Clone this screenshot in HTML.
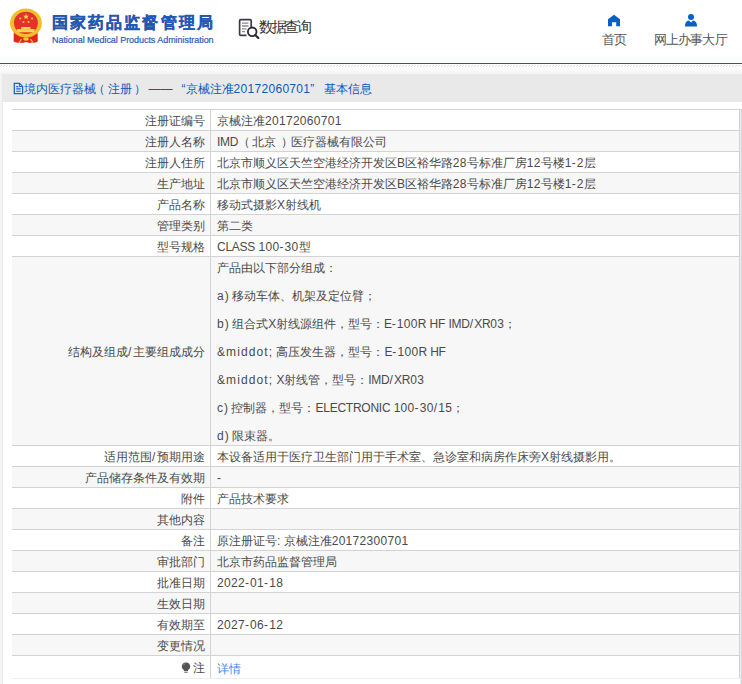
<!DOCTYPE html>
<html><head><meta charset="utf-8">
<style>
*{margin:0;padding:0;box-sizing:border-box}
html,body{width:742px;height:684px;overflow:hidden;background:#fff}
body{position:relative;font-family:"Liberation Sans",sans-serif;font-size:12px;color:#4a4a4a}
.abs{position:absolute;white-space:nowrap}
#title{left:52px;top:10.5px;font-size:16px;letter-spacing:2.1px;font-weight:bold;color:#2458b0;-webkit-text-stroke:0.3px #2458b0;line-height:24px}
#sub{left:52px;top:34px;font-size:9px;letter-spacing:-0.05px;color:#2a5cb0;-webkit-text-stroke:0.2px #2a5cb0;line-height:12px}
#sjcx{left:259px;top:16px;font-size:15px;letter-spacing:-2.4px;color:#333;line-height:22px}
.nav{font-size:13px;letter-spacing:-0.6px;color:#555;line-height:16px}
#blue{left:0;top:63px;width:742px;height:1px;background:#0a5fc4}
#hatch{left:0;top:65px;width:742px;height:2px;background:repeating-linear-gradient(135deg,#fff 0,#fff 1.5px,#ddd 1.5px,#ddd 2.5px)}
#fade{left:0;top:67px;width:742px;height:7px;background:linear-gradient(#fff,#f4f4f4)}
#lstrip{left:0;top:74px;width:3px;height:610px;background:linear-gradient(90deg,#f4f4f4 0,#f4f4f4 2px,#e8e8e8 2px)}
#phead{left:2px;top:74px;width:740px;height:27px;background:#e9e9e9}
#pline{left:2px;top:101px;width:740px;height:1px;background:#e6e9f2}
#pbody{left:3px;top:102px;width:739px;height:582px;background:#fff}
#ptitle{left:24px;top:81px;font-size:12px;color:#0a5ac0;line-height:16px}
.row{position:absolute;left:12px;width:730px;height:21px;border-top:1px solid #d3d3d3}
.row.g{background:#f7f7f7}
.lab{position:absolute;left:0;width:192.6px;text-align:right;top:2px;line-height:19px;white-space:nowrap}
.val{position:absolute;left:205px;top:2px;line-height:19px;white-space:nowrap}
#vdiv{left:210px;top:109px;width:1px;height:569px;background:#d3d3d3}
#rdiv{left:739px;top:109px;width:1px;height:569px;background:#d3d3d3}
#rstrip{left:740px;top:110px;width:2px;height:574px;background:linear-gradient(90deg,#ebebf0 0,#ebebf0 1px,#d9d9dd 1px)}
.lo{letter-spacing:1.1px}.dg{letter-spacing:0.3px}.hy{letter-spacing:1.2px}.up{letter-spacing:-0.25px}
</style></head><body>
<!-- emblem -->
<svg class="abs" style="left:0;top:0" width="50" height="50" viewBox="0 0 50 50">
  <path d="M13.8 32 L13.6 41.6 Q16.5 43.3 19.5 42.4 L22.5 43 L26 42 L29.5 43 L32.5 42.4 Q35.5 43.3 37.8 41.6 L37.6 32Z" fill="#e3261d"/>
  <ellipse cx="25.95" cy="23.1" rx="15.95" ry="14.5" fill="#f1bf2c"/>
  <ellipse cx="25.9" cy="22.9" rx="12" ry="11.1" fill="#e6302a"/>
  <path d="M16.8 29.1 H34.6 V32.3 H16.8Z" fill="#f6d44e"/>
  <path d="M21.2 27 H30.5 V29.1 H21.2Z" fill="#f6d44e"/>
  <path d="M15.5 36.5 Q20 39.5 26 38 Q32 39.5 36.5 36.5 L37 39 Q31 41.5 26 40 Q21 41.5 15 39Z" fill="#e3261d"/>
  <path d="M19 42.5 L21.5 39.2 M33 42.5 L30.5 39.2" stroke="#f3c53a" stroke-width="1.2"/>
  <ellipse cx="26" cy="39" rx="2.8" ry="1.8" fill="#f3c53a"/>
  <path d="M26.1 13.5 l0.8 2.2 2.3 0 -1.85 1.35 .7 2.2 -1.95-1.35 -1.95 1.35 .7-2.2 -1.85-1.35 2.3 0z" fill="#f7d54a"/>
  <circle cx="20.3" cy="18.6" r="1" fill="#f7d54a"/><circle cx="32" cy="18.6" r="1" fill="#f7d54a"/>
  <circle cx="23.5" cy="22.1" r="1" fill="#f7d54a"/><circle cx="28.5" cy="22.1" r="1" fill="#f7d54a"/>
</svg>
<div class="abs" id="title">国家药品监督管理局</div>
<div class="abs" id="sub">National Medical Products Administration</div>
<svg class="abs" style="left:238px;top:18px" width="22" height="21" viewBox="0 0 22 21">
  <path d="M13.2 12.5 V2.8 Q13.2 1.6 12 1.6 H2.8 Q1.6 1.6 1.6 2.8 V16.2 Q1.6 17.4 2.8 17.4 H8.5" fill="none" stroke="#3a3a4c" stroke-width="1.7"/>
  <path d="M4 5.2h6.5M4 8h6.5M4 10.8h4.5M4 13.6h3" stroke="#8a8a8a" stroke-width="1.3"/>
  <circle cx="14.2" cy="13.8" r="4.3" fill="#fff" stroke="#2a2a3c" stroke-width="1.8"/>
  <path d="M17.2 17 L20.3 20" stroke="#2a2a3c" stroke-width="2.2" stroke-linecap="round"/>
</svg>
<div class="abs" id="sjcx">数据查询</div>
<svg class="abs" style="left:607px;top:14px" width="14" height="13" viewBox="0 0 14 13">
  <path d="M7 0.7 L13 5.3 V12.2 H9.2 V8.2 H5 V12.2 H1 V5.3Z" fill="#0a5fc4"/>
</svg>
<div class="abs nav" style="left:602px;top:32px">首页</div>
<svg class="abs" style="left:684px;top:13px" width="14" height="14" viewBox="0 0 14 14">
  <circle cx="7" cy="4" r="3" fill="#0a5fc4"/>
  <path d="M1 13.5 Q1 8 5 7.6 L7 9.6 L9 7.6 Q13 8 13 13.5Z" fill="#0a5fc4"/>
</svg>
<div class="abs nav" style="left:654px;top:32px;letter-spacing:-0.9px">网上办事大厅</div>

<div class="abs" id="blue"></div>
<svg class="abs" style="left:0;top:65px" width="742" height="2"><defs><pattern id="hp" width="3" height="2" patternUnits="userSpaceOnUse"><path d="M-0.5 2.3 L2.2 -0.3" stroke="#d6d6d6" stroke-width="1"/></pattern></defs><rect width="742" height="2" fill="url(#hp)"/></svg>
<div class="abs" id="fade"></div>
<div class="abs" id="lstrip"></div>
<div class="abs" id="phead"></div>
<div class="abs" id="pline"></div>
<div class="abs" id="pbody"></div>
<svg class="abs" style="left:13px;top:82px" width="11" height="13" viewBox="0 0 11 13">
  <path d="M1.3 1.4 H6.6 L9.6 4.4 V11.6 H1.3Z" fill="none" stroke="#1d5fc6" stroke-width="1.25"/>
  <path d="M6.4 1.6 V4.6 H9.4" fill="none" stroke="#1d5fc6" stroke-width="1"/>
  <path d="M3.2 4.6h2.2M3.2 6.9h4.6M3.2 9.3h4.6" stroke="#1d5fc6" stroke-width="1.1"/>
</svg>
<div class="abs" id="ptitle">境内医疗器械<span style="margin-left:-3px;letter-spacing:3px">（</span>注册<span style="margin-left:1.7px;letter-spacing:-0.6px">）</span> —— <span style="margin-left:5.8px">“</span>京械注准<span class="dg">20172060701</span><span style="margin-right:6.3px">”</span> 基本信息</div>

<div id="rows">
<div class="row" style="top:109px"><span class="lab">注册证编号</span><span class="val">京械注准<span class="dg">20172060701</span></span></div>
<div class="row g" style="top:130px"><span class="lab">注册人名称</span><span class="val"><span class="up">IMD</span><span style="letter-spacing:2px">（</span>北京<span style="margin-left:4.8px;letter-spacing:-1.9px">）</span>医疗器械有限公司</span></div>
<div class="row" style="top:151px"><span class="lab">注册人住所</span><span class="val">北京市顺义区天竺空港经济开发区<span class="up">B</span>区裕华路<span class="dg">28</span>号标准厂房<span class="dg">12</span>号楼<span class="dg">1</span><span class="hy">-</span><span class="dg">2</span>层</span></div>
<div class="row g" style="top:172px"><span class="lab">生产地址</span><span class="val">北京市顺义区天竺空港经济开发区<span class="up">B</span>区裕华路<span class="dg">28</span>号标准厂房<span class="dg">12</span>号楼<span class="dg">1</span><span class="hy">-</span><span class="dg">2</span>层</span></div>
<div class="row" style="top:193px"><span class="lab">产品名称</span><span class="val">移动式摄影<span class="up">X</span>射线机</span></div>
<div class="row g" style="top:214px"><span class="lab">管理类别</span><span class="val">第二类</span></div>
<div class="row" style="top:235px"><span class="lab">型号规格</span><span class="val"><span class="up">CLASS</span> <span class="dg">100</span><span class="hy">-</span><span class="dg">30</span>型</span></div>
<div class="row g" style="top:256px;height:189px"><span class="lab" style="top:86px">结构及组成<span class="hy">/</span>主要组成成分</span><span class="val" style="top:2px">产品由以下部分组成：</span><span class="val" style="top:30px"><span class="lo">a</span>) 移动车体、机架及定位臂；</span><span class="val" style="top:58px"><span class="lo">b</span>) 组合式<span class="up">X</span>射线源组件，型号：<span class="up">E</span><span class="hy">-</span><span class="dg">100</span><span class="up">R</span> <span class="up">HF</span> <span class="up">IMD</span><span class="hy">/</span><span class="up">XR</span><span class="dg">03</span>；</span><span class="val" style="top:86px"><span class="lo">&amp;middot;</span> 高压发生器，型号：<span class="up">E</span><span class="hy">-</span><span class="dg">100</span><span class="up">R</span> <span class="up">HF</span></span><span class="val" style="top:114px"><span class="lo">&amp;middot;</span> <span class="up">X</span>射线管，型号：<span class="up">IMD</span><span class="hy">/</span><span class="up">XR</span><span class="dg">03</span></span><span class="val" style="top:142px"><span class="lo">c</span>) 控制器，型号：<span class="up">ELECTRONIC</span> <span class="dg">100</span><span class="hy">-</span><span class="dg">30</span><span class="hy">/</span><span class="dg">15</span>；</span><span class="val" style="top:170px"><span class="lo">d</span>) 限束器。</span></div>
<div class="row" style="top:445px"><span class="lab">适用范围<span class="hy">/</span>预期用途</span><span class="val">本设备适用于医疗卫生部门用于手术室、急诊室和病房作床旁<span class="up">X</span>射线摄影用。</span></div>
<div class="row g" style="top:466px"><span class="lab">产品储存条件及有效期</span><span class="val"><span class="hy">-</span></span></div>
<div class="row" style="top:487px"><span class="lab">附件</span><span class="val">产品技术要求</span></div>
<div class="row g" style="top:508px"><span class="lab">其他内容</span><span class="val"></span></div>
<div class="row" style="top:529px"><span class="lab">备注</span><span class="val">原注册证号: 京械注准<span class="dg">20172300701</span></span></div>
<div class="row g" style="top:550px"><span class="lab">审批部门</span><span class="val">北京市药品监督管理局</span></div>
<div class="row" style="top:571px"><span class="lab">批准日期</span><span class="val"><span class="dg">2022</span><span class="hy">-</span><span class="dg">01</span><span class="hy">-</span><span class="dg">18</span></span></div>
<div class="row g" style="top:592px"><span class="lab">生效日期</span><span class="val"></span></div>
<div class="row" style="top:613px"><span class="lab">有效期至</span><span class="val"><span class="dg">2027</span><span class="hy">-</span><span class="dg">06</span><span class="hy">-</span><span class="dg">12</span></span></div>
<div class="row g" style="top:634px"><span class="lab">变更情况</span><span class="val"></span></div>
<div class="row" style="top:655px;height:24px;border-bottom:1px solid #eceef2"><span class="lab" style="top:3px"><svg width="10" height="11" viewBox="0 0 10 11" style="vertical-align:-1px;margin-right:2px"><path d="M5 0.5 C2.2 0.5 0.8 2.5 0.8 4.5 C0.8 6.3 2 7.2 3 8.2 V9 H7 V8.2 C8 7.2 9.2 6.3 9.2 4.5 C9.2 2.5 7.8 0.5 5 0.5Z" fill="#555"/><path d="M2.6 3.2 Q3 2 4.2 1.7" fill="none" stroke="#999" stroke-width="0.8"/><path d="M3.3 10.2 H6.7" stroke="#555" stroke-width="1"/></svg>注</span><span class="val" style="top:4px;color:#348bf6">详情</span></div>
</div>
<div class="abs" id="vdiv"></div>
<div class="abs" id="rdiv"></div>
<div class="abs" id="rstrip"></div>
</body></html>
